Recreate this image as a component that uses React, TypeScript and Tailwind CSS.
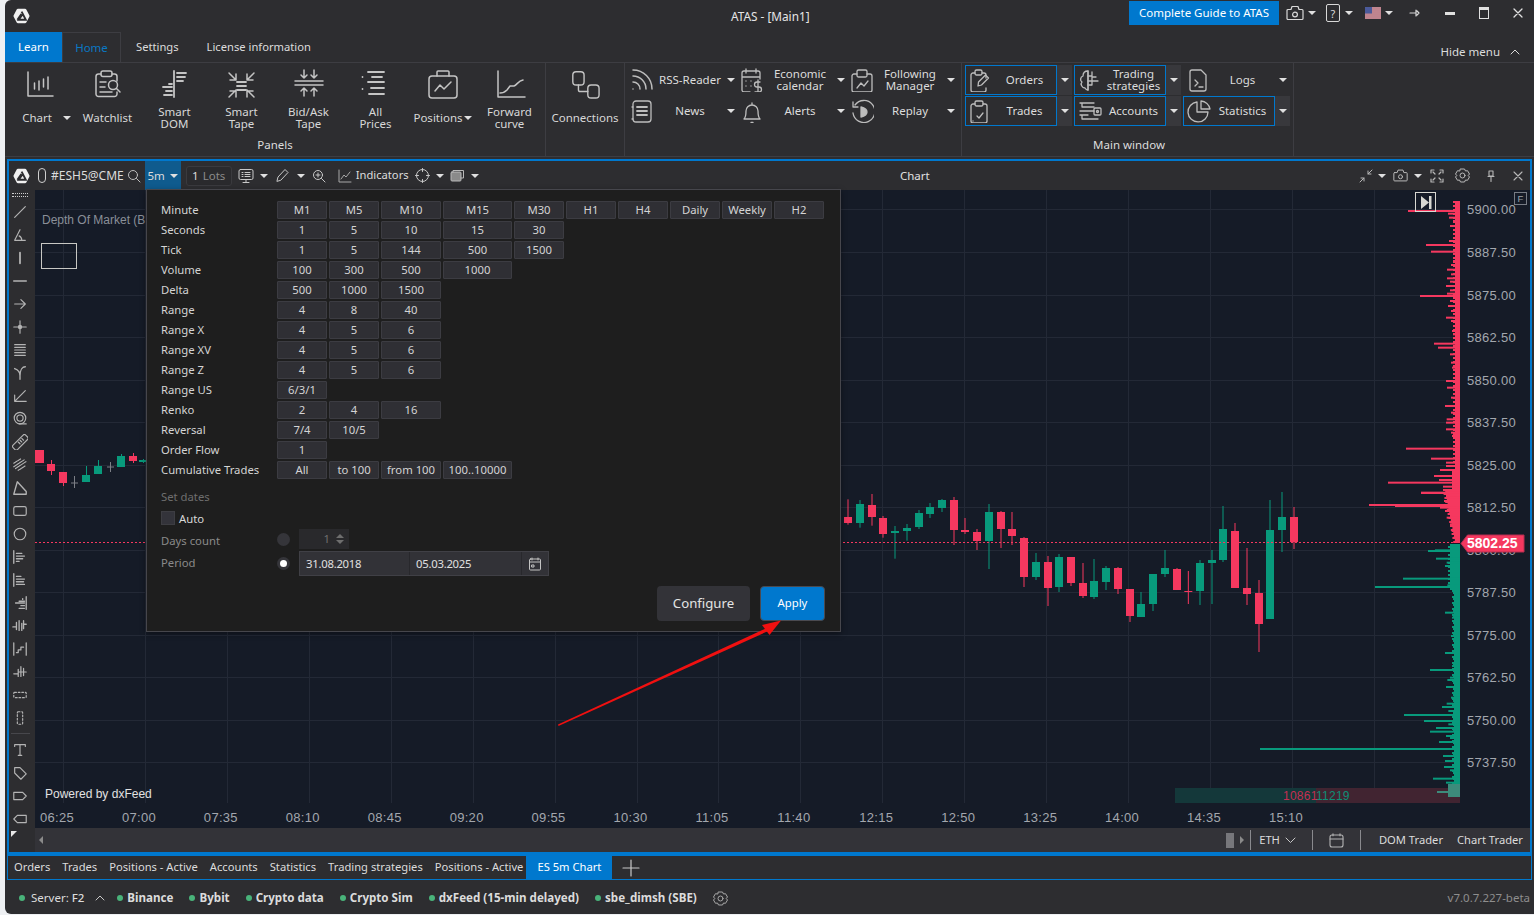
import type { ReactNode } from 'react'

const RED = '#f5385f'
const GREEN = '#089a7c'

// page coordinates are used inside the chart svg (translated by the canvas origin)
// [x, wickTop, wickBottom, bodyTop, bodyBottom, up]
const leftCandles: [number, number, number, number, number, number][] = [
  [39, 450, 463, 450, 463, 0], [51, 460, 475, 464, 471, 0], [63, 472, 486, 472, 483, 0],
  [86, 466, 482, 475, 482, 1], [98, 460, 474, 466, 474, 1], [121, 454, 467, 456, 467, 1],
  [133, 453, 463, 456, 461, 0], [143, 459, 463, 460, 462, 1],
]

// zoomed 3x from (840, 480)
const rightCandles: [number, number, number, number, number, number][] = [
  [24, 58, 134, 111, 129, 0], [60, 60, 143, 72, 129, 1], [96, 42, 137, 75, 111, 0],
  [129, 108, 173, 114, 162, 0], [165, 138, 236, 153, 159, 1], [201, 132, 182, 144, 153, 1],
  [237, 90, 147, 99, 141, 1], [270, 69, 114, 81, 102, 1], [306, 57, 96, 60, 84, 1],
  [342, 51, 195, 60, 150, 0], [375, 114, 162, 150, 156, 0], [411, 147, 210, 156, 183, 0],
  [447, 72, 267, 96, 183, 1], [483, 93, 204, 96, 147, 0], [516, 96, 195, 147, 168, 0],
  [552, 171, 321, 174, 291, 0], [588, 219, 300, 246, 291, 1], [624, 228, 378, 246, 324, 0],
  [657, 222, 336, 231, 321, 1], [693, 231, 318, 231, 309, 0], [729, 249, 354, 309, 348, 0],
  [762, 237, 357, 303, 351, 1], [798, 258, 330, 264, 306, 1], [834, 261, 342, 264, 327, 0],
  [870, 327, 426, 327, 408, 0], [903, 336, 411, 372, 411, 1], [939, 282, 393, 282, 372, 1],
  [975, 210, 291, 264, 282, 1], [1011, 264, 330, 267, 330, 0], [1045, 273, 372, 333, 336, 0],
  [1080, 240, 375, 249, 333, 1], [1116, 210, 372, 240, 249, 1], [1149, 78, 246, 147, 240, 1],
  [1185, 129, 324, 153, 324, 0], [1221, 204, 375, 324, 342, 0], [1257, 300, 516, 339, 432, 0],
  [1290, 60, 417, 150, 417, 1], [1326, 36, 216, 111, 150, 1], [1362, 81, 207, 111, 186, 0],
]

// [zoomY, zoomX] of volume profile spikes
const redTop = [[150, 204], [158, 324], [170, 327], [180, 339], [195, 330], [240, 327], [252, 258], [272, 273], [300, 339], [312, 333], [326, 321], [340, 333], [352, 321], [362, 330], [375, 318], [388, 330], [398, 321], [405, 240], [420, 330], [435, 324], [450, 333], [470, 318], [480, 333], [510, 336], [520, 339], [548, 282], [560, 294], [580, 330], [605, 333], [620, 336], [660, 318], [680, 321], [710, 333], [735, 315], [755, 333], [775, 320], [785, 318], [805, 318], [815, 333], [825, 336], [863, 198], [893, 273], [905, 318], [915, 318], [927, 300], [945, 282], [957, 297], [965, 144], [977, 309], [987, 309], [996, 243], [1010, 321]]
const redLow = [[5, 243], [20, 320], [30, 312], [42, 87], [45, 165], [50, 300], [60, 315], [80, 320], [100, 330], [120, 335], [140, 340]]
const greenLow = [[170, 330], [178, 285], [180, 264], [203, 288], [215, 320], [225, 315], [240, 325], [263, 189], [270, 330], [283, 322], [288, 105], [300, 338], [365, 315], [380, 336], [435, 333], [486, 315], [525, 336], [537, 270], [560, 330], [567, 322], [588, 318], [605, 340], [620, 333], [638, 320], [648, 306], [660, 325], [672, 192], [690, 252], [700, 325], [711, 288], [722, 270], [735, 318], [741, 330], [753, 297], [774, -240], [795, 309], [810, 315], [828, 312], [838, 330], [863, 279], [875, 318], [895, 306]]

const prices = ['5900.00', '5887.50', '5875.00', '5862.50', '5850.00', '5837.50', '5825.00', '5812.50', '5800.00', '5787.50', '5775.00', '5762.50', '5750.00', '5737.50']
const priceY = [209, 252, 295, 337, 380, 422, 465, 507, 550, 592, 635, 677, 720, 762]
const times = ['06:25', '07:00', '07:35', '08:10', '08:45', '09:20', '09:55', '10:30', '11:05', '11:40', '12:15', '12:50', '13:25', '14:00', '14:35', '15:10']

const rows: [string, string[]][] = [
  ['Minute', ['M1', 'M5', 'M10', 'M15', 'M30', 'H1', 'H4', 'Daily', 'Weekly', 'H2']],
  ['Seconds', ['1', '5', '10', '15', '30']],
  ['Tick', ['1', '5', '144', '500', '1500']],
  ['Volume', ['100', '300', '500', '1000']],
  ['Delta', ['500', '1000', '1500']],
  ['Range', ['4', '8', '40']],
  ['Range X', ['4', '5', '6']],
  ['Range XV', ['4', '5', '6']],
  ['Range Z', ['4', '5', '6']],
  ['Range US', ['6/3/1']],
  ['Renko', ['2', '4', '16']],
  ['Reversal', ['7/4', '10/5']],
  ['Order Flow', ['1']],
  ['Cumulative Trades', ['All', 'to 100', 'from 100', '100..10000']],
]

function Svg({ size = 24, vb = 24, sw = 1.4, className = '', children }: { size?: number; vb?: number; sw?: number; className?: string; children: ReactNode }) {
  return (
    <svg width={size} height={size} viewBox={`0 0 ${vb} ${vb}`} fill="none" stroke="currentColor" strokeWidth={sw} strokeLinecap="round" strokeLinejoin="round" className={`shrink-0 ${className}`}>
      {children}
    </svg>
  )
}

function Caret({ className = '' }: { className?: string }) {
  return <span className={`inline-block w-0 h-0 border-l-[4px] border-r-[4px] border-t-[4px] border-l-transparent border-r-transparent border-t-[#e0e0e0] shrink-0 ${className}`} />
}

function Logo() {
  return (
    <svg width="17" height="16" viewBox="0 0 17 16" className="shrink-0">
      <path d="M5 .8h7a1.5 1.5 0 0 1 1.3.8l3 5.6a1.5 1.5 0 0 1 0 1.6l-3 5.6a1.5 1.5 0 0 1-1.3.8H5a1.5 1.5 0 0 1-1.3-.8L.7 8.8a1.5 1.5 0 0 1 0-1.6l3-5.6A1.5 1.5 0 0 1 5 .8z" fill="#f0f0f0" />
      <path d="M8.6 3.6 12.8 11.8H5.6L9.2 6.9" fill="none" stroke="#2d2d30" strokeWidth="1.9" />
      <path d="M4.4 11.8 8.4 6" fill="none" stroke="#2d2d30" strokeWidth="1.9" />
    </svg>
  )
}

function Camera({ size = 18 }: { size?: number }) {
  return (
    <Svg size={size} vb={18} sw={1.2}>
      <path d="M2 5.5h3l1-3h6l1 3h3a1 1 0 0 1 1 1v8a1 1 0 0 1-1 1H2a1 1 0 0 1-1-1v-8a1 1 0 0 1 1-1z" />
      <circle cx="9" cy="10.5" r="2.4" />
    </Svg>
  )
}

const ribbonIcons: Record<string, ReactNode> = {
  chart: (
    <>
      <path d="M3 4v24h25" />
      <path d="M9.5 15v6M14 13v9M18.5 11v8M23 9v12" />
    </>
  ),
  watch: (
    <>
      <path d="M9 6H6.5A2.5 2.5 0 0 0 4 8.500V26a2.500 2.500 0 0 0 2.500 2.500h16A2.500 2.500 0 0 0 25 26v-2M25 13V8.500A2.500 2.500 0 0 0 22.500 6H20" />
      <rect x="9" y="3" width="11" height="5.500" rx="2" />
      <circle cx="21" cy="17" r="4.500" />
      <path d="m24.500 20.500 3.500 3.500M8 14h6M8 19h5M8 24h12" />
    </>
  ),
  dom: <path d="M15 3v26M18 5h9M18 9h8M18 13h6M4 19h9M7 23h6M5 27h8M10 16h3" strokeWidth="1.8" />,
  tape: (
    <>
      <path d="M3 5l7 7M4 12h6V6M28 5l-7 7M27 12h-6V6M3 29l7-7M4 23h6v6M28 29l-7-7M27 23h-6v6" />
      <path d="M11 14h9M11 18h9M11 22h9" strokeWidth="1.8" />
    </>
  ),
  bidask: (
    <>
      <path d="M11 2v8M8 7l3 3 3-3M21 2v8M18 7l3 3 3-3M11 28v-8M8 23l3-3 3 3M21 28v-8M18 23l3-3 3 3" />
      <path d="M2 13h28M2 17h28" strokeWidth="1.5" />
    </>
  ),
  all: <path d="M8 4h16M12 9h10M8 14h16M11 20h13M9 26h15M2.500 9v.1M2.500 21v.1" strokeWidth="1.800" />,
  pos: (
    <>
      <rect x="2" y="8" width="28" height="22" rx="3" />
      <path d="M10 8V4a1 1 0 0 1 1-1h10a1 1 0 0 1 1 1v4M8 23l5-6 4 4 7-7" />
    </>
  ),
  forward: (
    <>
      <path d="M4 3v26h27" />
      <path d="M6 25c4 0 5-1 7-3l3-4h4c3-1 4-5 9-6" />
    </>
  ),
  conn: (
    <>
      <rect x="3" y="3" width="12" height="14" rx="3.500" />
      <rect x="19" y="17" width="12" height="14" rx="3.500" />
      <path d="M9 17v5a2 2 0 0 0 2 2h8" />
    </>
  ),
  rss: <path d="M3 21v.1M3 14a7 7 0 0 1 7 7M3 8a13 13 0 0 1 13 13M3 2a19 19 0 0 1 19 19" strokeWidth="1.5" />,
  econ: (
    <>
      <path d="M10 24H4a2 2 0 0 1-2-2V5a2 2 0 0 1 2-2h14a2 2 0 0 1 2 2v6M2 9h18M6 1v4M16 1v4M6 13v.1M11 13v.1M6 18v.1M11 18v.1" />
      <path d="M20 14h-3a2 2 0 0 0 0 5h2a2 2 0 0 1 0 5h-4M18 12v14" />
    </>
  ),
  follow: (
    <>
      <path d="M7 6H4a2 2 0 0 0-2 2v14a2 2 0 0 0 2 2h16a2 2 0 0 0 2-2V8a2 2 0 0 0-2-2h-3" />
      <rect x="7" y="2" width="10" height="7" rx="1.500" />
      <path d="M7 20l4-5 3 3 4-5" />
    </>
  ),
  news: (
    <>
      <rect x="3" y="2" width="18" height="21" rx="3" />
      <path d="M7 8h10M7 12h10M7 16h10" strokeWidth="1.800" />
      <path d="M3 8H2M3 20H2" />
    </>
  ),
  bell: <path d="M4 20c2-2 2-4 2-8a6 6 0 0 1 12 0c0 4 0 6 2 8zM12 6V4M11 23.500h2" />,
  replay: (
    <>
      <path d="M5 6a11 11 0 1 1-2 8M3 3v5h5" />
      <path d="M11 8v10c4-1 6-3 6-5s-2-4-6-5z" fill="currentColor" />
    </>
  ),
  orders: (
    <>
      <path d="M6 5H4a2 2 0 0 0-2 2v15a2 2 0 0 0 2 2h11a2 2 0 0 0 2-2v-2M17 10V7a2 2 0 0 0-2-2h-2" />
      <rect x="6" y="2" width="7" height="5" rx="1.500" />
      <path d="m9 18 .5-4 7-7 3 3-7 7z" />
    </>
  ),
  strategy: (
    <>
      <path d="M10 3C6 3 5 6 5 8c-3 1-3 5-1 6-2 2 0 6 3 6 1 2 3 2 3 2z" />
      <path d="M14 4v4h-4M18 9h-4v4h-4M20 13h-6v4h-4" />
      <path d="M10 3v19" />
    </>
  ),
  logs: (
    <>
      <path d="M14 2H5a2 2 0 0 0-2 2v17a2 2 0 0 0 2 2h12a2 2 0 0 0 2-2V7z" />
      <path d="M8 12l3 3-3 3M12 19h4" />
    </>
  ),
  trades: (
    <>
      <path d="M6 5H4a2 2 0 0 0-2 2v15a2 2 0 0 0 2 2h12a2 2 0 0 0 2-2V7a2 2 0 0 0-2-2h-2" />
      <rect x="6" y="2" width="8" height="5" rx="1.500" />
      <path d="m8 17 2 2 4-5M4 22v.1" />
    </>
  ),
  accounts: (
    <>
      <path d="M2 4h14M8 8h8M2 12h14M2 16h8M6 20h14M4 4v4h4M4 16v4h2" />
      <rect x="16" y="9" width="7" height="7" rx="1" />
      <circle cx="19.500" cy="12.500" r="1" />
    </>
  ),
  stats: (
    <>
      <path d="M10 3a10 10 0 1 0 11 10H10z" />
      <path d="M14 2a10 10 0 0 1 9 8h-9z" />
    </>
  ),
}

function BigButton({ icon, label, w = 67, caret, iconSize = 32, gapCaret = 'ml-[1px]' }: { icon: string; label: ReactNode; w?: number; caret?: boolean; iconSize?: number; gapCaret?: string }) {
  return (
    <div className="flex flex-col items-center text-[#d8d8d8]" style={{ width: w }}>
      <div className="h-[36px] flex items-center justify-center text-[#c4c4c4]">
        <Svg size={iconSize} vb={32} sw={1.5}>{ribbonIcons[icon]}</Svg>
      </div>
      <div className="h-[28px] mt-[2px] flex items-center justify-center text-center leading-[12px]">
        <span>{label}</span>
        {caret && <Caret className={gapCaret} />}
      </div>
    </div>
  )
}

function SmallButton({ icon, label, w = 92, boxed, dark = true, drop = 15, textClass = '' }: { icon: string; label: ReactNode; w?: number; boxed?: boolean; dark?: boolean; drop?: number; textClass?: string }) {
  return (
    <div className="flex h-[30px]">
      <div className={`flex items-center pl-[3px] ${boxed ? 'border border-[#0078ce]' : 'border border-transparent'}`} style={{ width: w }}>
        <span className="text-[#bdbdbd]"><Svg size={24} sw={1.3}>{ribbonIcons[icon]}</Svg></span>
        <span className={`flex-1 text-center leading-[12px] ${textClass}`}>{label}</span>
      </div>
      <div className={`flex items-center justify-center ${dark ? 'bg-[#38383c]' : ''}`} style={{ width: drop }}>
        <Caret />
      </div>
    </div>
  )
}

function MenuButton({ icon, label, w = 110 }: { icon: string; label: ReactNode; w?: number }) {
  return (
    <div className="flex items-center h-[30px]" style={{ width: w }}>
      <span className="w-[28px] flex justify-center text-[#bdbdbd]"><Svg size={24} sw={1.3}>{ribbonIcons[icon]}</Svg></span>
      <span className="flex-1 text-center leading-[12px] pr-[3px]">{label}</span>
      <Caret className="mr-[3px]" />
    </div>
  )
}

const toolPaths: ReactNode[] = [
  <path d="M3 15 15 3" />,
  <path d="M3 15h12M3 15 9 3M8 10c2 1 3 3 3 5" />,
  <path d="M9 3v12" strokeWidth="2" />,
  <path d="M2 9h14M4 9h4" strokeWidth="1.800" />,
  <path d="M3 9h12M10 4l5 5-5 5" />,
  <><path d="M9 2v14M2 9h14" /><circle cx="9" cy="9" r="1.800" fill="currentColor" /></>,
  <path d="M3 3h12M3 6h12M3 9h12M3 12h12M3 15h12" />,
  <path d="M3 4c3 1 6 4 6 8v4M15 2c-3 0-6 3-6 10M3 4v.1" strokeWidth="1.500" />,
  <path d="M15 3 3 15M3 8v7h7M3 15h13" />,
  <><circle cx="9" cy="8" r="6.500" /><circle cx="9" cy="8" r="3.500" /><path d="M8 14.500h8" /></>,
  <><rect x="-1" y="6" width="20" height="7" rx="2" transform="rotate(-45 9 9)" /><path d="M7 9l2 2M9 7l2 2M11 5l2 2" /></>,
  <path d="M2 7l8-5M2 11l12-8M4 13l12-8M7 15l8-5" strokeDasharray="1.500 1" />,
  <path d="M2 16 6 2l10 11v3z" strokeWidth="1.500" />,
  <rect x="2" y="4" width="14" height="10" rx="2" />,
  <circle cx="9" cy="9" r="6.500" />,
  <path d="M2 2v14M5 5h6M5 8h9M5 11h7M5 14h3" strokeWidth="1.500" />,
  <path d="M2 2v14M5 5h5M5 8h9M5 11h8M5 14h9" strokeWidth="1.500" />,
  <path d="M16 2v14M12 4v1M8 7h6M4 9h10M10 12h4M8 15h6" strokeWidth="1.500" />,
  <path d="M1 10h4M5 5v8M8 3v11M11 6v8M13 3v9M16 7h-3" strokeWidth="1.500" />,
  <path d="M2 2v14M16 2v14M5 13h2v-3h3V7h3" strokeWidth="1.400" />,
  <path d="M2 11h5M7 6v8M10 3v11M13 5v8M7 9h9" strokeWidth="1.400" />,
  <rect x="2" y="6" width="14" height="6" rx="1" strokeDasharray="2 2" />,
  <rect x="6" y="2" width="6" height="14" rx="1" strokeDasharray="2 2" />,
]

const bottomTools: ReactNode[] = [
  <><path d="M3 5V3h12v2M9 3v12M7 15h4" /></>,
  <><path d="M3 3h6l7 7-6 6-7-7z" /></>,
  <path d="M2 5h10l4 4-4 4H2z" />,
  <path d="M16 5H6L2 9l4 4h10z" />,
]

function ChartSvg() {
  const v: ReactNode[] = []
  for (let i = 0; i < 17; i++) {
    const x = Math.round(63 + 81.93 * i) + 0.5
    v.push(<line key={i} x1={x} x2={x} y1={190} y2={803} stroke="#232936" />)
  }
  const base: ReactNode[] = []
  for (let y = 201; y < 542; y += 2) {
    let l = 1456 - ((y * 7) % 4)
    if (y > 470) l = 1452 - ((y * 5) % 5)
    if (y > 490) l = 1446 + (y - 490) * 0.2 - ((y * 3) % 4)
    base.push(<rect key={y} x={l} y={y} width={1460 - l} height={2} fill={RED} />)
  }
  for (let y = 544; y < 786; y += 2) {
    let l = 1454 - ((y * 7) % 3)
    if (y < 590) l = 1450 - ((y * 3) % 4)
    base.push(<rect key={y} x={l} y={y} width={1460 - l} height={2} fill={GREEN} />)
  }
  return (
    <svg width="1495" height="638" viewBox="0 0 1495 638" className="absolute left-0 top-0">
      <g transform="translate(-35 -190)">
        {priceY.map((y) => (
          <line key={y} x1={35} x2={1458} y1={y + 0.5} y2={y + 0.5} stroke="#232936" />
        ))}
        {v}
        {leftCandles.map(([x, a, b, c, d, up], i) => {
          const col = up ? GREEN : RED
          return (
            <g key={i}>
              <rect x={x} y={a} width={1} height={b - a} fill={col} />
              <rect x={Math.max(35, x - 4)} y={c} width={x < 40 ? 9 : 8} height={d - c} fill={col} />
            </g>
          )
        })}
        <path d="M74.500 476v12M71 483h7M110.500 462v10M107 467h7" stroke="#7c7f86" />
        {rightCandles.map(([x, a, b, c, d, up], i) => {
          const col = up ? GREEN : RED
          const cx = 840 + x / 3
          return (
            <g key={i}>
              <rect x={cx - 0.5} y={480 + a / 3} width={1} height={(b - a) / 3} fill={col} />
              <rect x={cx - 4} y={480 + c / 3} width={8} height={Math.max(1, (d - c) / 3)} fill={col} />
            </g>
          )
        })}
        <line x1={35} x2={1460} y1={542.500} y2={542.500} stroke={RED} strokeDasharray="2 2" />
        {base}
        {redTop.map(([y, x], i) => <rect key={i} x={1340 + x / 3} y={160 + y / 3} width={120 - x / 3} height={2} fill={RED} />)}
        {redLow.map(([y, x], i) => <rect key={i} x={1340 + x / 3} y={490 + y / 3} width={120 - x / 3} height={2} fill={RED} />)}
        {greenLow.map(([y, x], i) => <rect key={i} x={1340 + x / 3} y={490 + y / 3} width={120 - x / 3} height={2} fill={GREEN} />)}
        <rect x={1175} y={788} width={141} height={15} fill="#14383a" />
        <rect x={1316} y={788} width={144} height={15} fill="#412431" />
        <rect x={1448} y={784} width={12} height={13} fill="#3d8b7b" />
        <rect x={1437} y={791} width={23} height={2} fill="#3d8b7b" />
        <text x={1283} y={800} fontSize="12" letterSpacing="0.25" fontFamily="Liberation Sans, sans-serif" fill="#c42f52">10861</text>
        <text x={1316} y={800} fontSize="12" letterSpacing="0.25" fontFamily="Liberation Sans, sans-serif" fill="#0e8f77">11219</text>
        {prices.map((p, i) => (
          <text key={p} x={1467} y={priceY[i] + 5} fontSize="13" letterSpacing="0.3" fontFamily="Liberation Sans, sans-serif" fill="#a3a7ae">{p}</text>
        ))}
        {times.map((t, i) => (
          <text key={t} x={40 + 81.93 * i} y={822} fontSize="13" letterSpacing="0.3" fontFamily="Liberation Sans, sans-serif" fill="#a3a7ae">{t}</text>
        ))}
        <text x={45} y={798} fontSize="12" fontFamily="Liberation Sans, sans-serif" fill="#e2e2e2">Powered by dxFeed</text>
        <text x={42} y={224} fontSize="12" fontFamily="Liberation Sans, sans-serif" fill="#8a8f98">Depth Of Market (B</text>
        <rect x={41.500} y={243.500} width={35} height={25} fill="none" stroke="#c8c8c4" />
        <rect x={1415.500} y={192.500} width={20} height={19} fill="none" stroke="#d8d8d2" />
        <path d="M1421 196v13l8-6.500z" fill="#d8d8d2" />
        <rect x={1429} y={196} width={2.500} height={13} fill="#d8d8d2" />
        <rect x={1514.500} y={192.500} width={12} height={12} fill="none" stroke="#777c85" />
        <text x={1517.500} y={202} fontSize="9.500" fontFamily="Liberation Sans, sans-serif" fill="#9aa0a8">F</text>
        <path d="M1461 543.500l6.500-8.500H1524v17h-56.500z" fill={RED} stroke="#b52f50" />
        <text x={1467} y={548} fontSize="14" fontWeight="bold" fontFamily="Liberation Sans, sans-serif" fill="#ffffff">5802.25</text>
      </g>
    </svg>
  )
}

// the annotation arrow sits on top of the dialog
function RedArrow() {
  return (
    <svg width="240" height="115" viewBox="0 0 240 115" className="absolute left-[520px] top-[428px] pointer-events-none">
      <g transform="translate(-555 -618)">
        <path d="M558 724.500 770 626.500 771.500 629.500 558.500 726z" fill="#f01010" />
        <path d="M781 620.500 762 625 769.500 635z" fill="#f01010" />
      </g>
    </svg>
  )
}

function Dialog() {
  return (
    <div className="absolute left-[111px] top-[-1px] w-[695px] h-[443px] bg-[#1e1e1e] border border-[#46464c] pt-[11px] pl-[14px] pr-[15px] text-[11.3px] text-[#d4d4d4] shadow-[0_2px_6px_rgba(0,0,0,0.4)]">
      <div className="grid grid-cols-[114px_50px_50px_60px_69px_50px_50px_50px_50px_50px_50px] gap-x-[2px] gap-y-[2px] auto-rows-[18px]">
        {rows.map(([label, vals]) => (
          <div key={label} className="contents">
            <div className="leading-[18px]">{label}</div>
            {vals.map((val, i) => (
              <div key={i} className="bg-[#2f2f34] border border-[#3c3c42] rounded-[1px] flex items-center justify-center">
                {val}
              </div>
            ))}
            {Array.from({ length: 10 - vals.length }).map((_, i) => <div key={`e${i}`} />)}
          </div>
        ))}
      </div>
      <div className="mt-[11px] h-[14px] leading-[14px] text-[#6e6e6e]">Set dates</div>
      <div className="mt-[7px] h-[14px] flex items-center">
        <span className="w-[14px] h-[14px] bg-[#33333a] border border-[#3d3d42]" />
        <span className="ml-[4px] pt-[2px] text-[#d8d8d8]">Auto</span>
      </div>
      <div className="mt-[4px] h-[20px] flex items-center">
        <span className="w-[116px] pt-[5px] text-[#8a8a8a]">Days count</span>
        <span className="w-[22px]"><span className="block w-[13px] h-[13px] rounded-full bg-[#35353a]" /></span>
        <div className="w-[50px] h-[20px] bg-[#29292c] flex items-center justify-end text-[#6e6e6e]">
          <span className="mr-[6px]">1</span>
          <div className="flex flex-col gap-[2px] mr-[5px]">
            <span className="w-0 h-0 border-l-[4px] border-r-[4px] border-b-[4px] border-l-transparent border-r-transparent border-b-[#6e6e6e]" />
            <span className="w-0 h-0 border-l-[4px] border-r-[4px] border-t-[4px] border-l-transparent border-r-transparent border-t-[#6e6e6e]" />
          </div>
        </div>
      </div>
      <div className="mt-[2px] h-[25px] flex items-center">
        <span className="w-[116px] text-[#8a8a8a]">Period</span>
        <span className="w-[22px]">
          <span className="w-[13px] h-[13px] rounded-full bg-[#35353a] flex items-center justify-center"><span className="w-[7px] h-[7px] rounded-full bg-white" /></span>
        </span>
        <div className="w-[250px] h-[25px] bg-[#323237] border border-[#404046] flex items-center text-[#e0e0e0] tracking-[-0.25px]">
          <span className="w-[110px] pl-[6px] pt-[1px] h-full flex items-center border-r border-[#28282c]">31.08.2018</span>
          <span className="w-[112px] pl-[6px] pt-[1px] h-full flex items-center border-r border-[#28282c]">05.03.2025</span>
          <span className="flex-1 flex justify-center text-[#c4c4c4]">
            <Svg size={14} vb={14} sw={1}>
              <rect x="1.500" y="2" width="11" height="11" rx="1" />
              <path d="M1.500 5h11M4 1v2M10 1v2M4 8h2v2H4z" />
            </Svg>
          </span>
        </div>
      </div>
      <div className="mt-[10px] h-[35px] flex justify-end gap-[10px]">
        <div className="w-[93px] h-[35px] pt-[1px] rounded-[4px] bg-[#333338] flex items-center justify-center text-[13.2px] text-[#e4e4e4]">Configure</div>
        <div className="w-[65px] h-[35px] rounded-[4px] bg-[#0078ce] border border-[#4a4a50] flex items-center justify-center text-white">Apply</div>
      </div>
    </div>
  )
}

export default function App() {
  return (
    <div className="w-[1534px] h-[915px] overflow-hidden bg-[#eef0f3] pl-[5px] font-['Noto_Sans','Liberation_Sans',sans-serif] text-[11.5px] text-[#dcdcdc]">
      <div className="h-[914px] rounded-l-[6px] bg-[#2d2d30] flex flex-col">
        {/* title bar */}
        <div className="h-[32px] flex items-start relative">
          <div className="ml-[8px] mt-[8px]"><Logo /></div>
          <div className="absolute left-[726px] top-[8px] text-[11.8px] text-[#e6e6e6]">ATAS - [Main1]</div>
          <div className="ml-auto flex items-center mt-[1px] h-[24px]">
            <div className="w-[150px] h-[24px] bg-[#0078ce] text-white flex items-center justify-center">Complete Guide to ATAS</div>
            <div className="ml-[7px] flex items-center gap-[4px] text-[#d8d8d8]"><Camera size={18} /><Caret /></div>
            <div className="ml-[10px] flex items-center gap-[5px]">
              <span className="w-[14px] h-[18px] border border-[#d8d8d8] rounded-[2px] flex items-center justify-center text-[11px] leading-none">?</span>
              <Caret />
            </div>
            <div className="ml-[12px] flex items-center gap-[4px]">
              <svg width="16" height="12" viewBox="0 0 16 12">
                <rect width="16" height="12" fill="#c9c9cf" />
                <path d="M0 1h16M0 3h16M0 5h16M0 7h16M0 9h16M0 11h16" stroke="#b5404f" strokeWidth="1" />
                <rect width="7" height="6.500" fill="#4b5a9a" />
              </svg>
              <Caret />
            </div>
            <div className="ml-[16px] text-[#d8d8d8]">
              <Svg size={12} vb={12} sw={1.2}><path d="M1 6h6M7 3v6M8 4l2 2-2 2" /></Svg>
            </div>
            <span className="ml-[24px] w-[10px] h-[3px] bg-[#e0e0e0]" />
            <span className="ml-[24px] w-[10px] h-[12px] border border-[#e0e0e0] border-t-[3px]" />
            <div className="ml-[24px] mr-[11px] text-[#e0e0e0]">
              <Svg size={10} vb={10} sw={1.3}><path d="M1 1l8 8M9 1l-8 8" /></Svg>
            </div>
          </div>
        </div>

        {/* ribbon tabs */}
        <div className="h-[31px] flex items-stretch border-b border-[#3d3d42]">
          <div className="w-[57px] bg-[#0078ce] text-white flex items-center justify-center">Learn</div>
          <div className="w-[59px] border border-b-0 border-[#3d3d42] bg-[#2d2d30] text-[#0a78c4] flex items-center justify-center">Home</div>
          <div className="ml-[15px] flex items-center text-[11.2px]">Settings</div>
          <div className="ml-[28px] flex items-center text-[11.2px]">License information</div>
          <div className="ml-auto mr-[14px] mt-[12px] flex items-center gap-[10px] h-[16px]">
            <span>Hide menu</span>
            <Svg size={10} vb={10} sw={1}><path d="M1 7l4-4 4 4" /></Svg>
          </div>
        </div>

        {/* ribbon */}
        <div className="h-[94px] flex border-b border-[#3d3d42]">
          <div className="w-[541px] border-r border-[#3d3d42] flex flex-col">
            <div className="flex pl-[2px] pt-[3px]">
              <BigButton icon="chart" label={<span className="ml-[12px] mr-[11px]">Chart</span>} caret gapCaret="ml-0" />
              <BigButton icon="watch" label="Watchlist" />
              <BigButton icon="dom" label={<>Smart<br />DOM</>} />
              <BigButton icon="tape" label={<>Smart<br />Tape</>} />
              <BigButton icon="bidask" label={<>Bid/Ask<br />Tape</>} />
              <BigButton icon="all" label={<>All<br />Prices</>} />
              <BigButton icon="pos" label="Positions" caret />
              <BigButton icon="forward" label={<>Forward<br />curve</>} />
            </div>
            <div className="text-center mt-[5px] leading-[16px]">Panels</div>
          </div>
          <div className="w-[79px] border-r border-[#3d3d42] flex flex-col items-center pt-[3px]">
            <BigButton icon="conn" label="Connections" w={78} iconSize={30} />
          </div>
          <div className="w-[337px] border-r border-[#3d3d42] pl-[3px] pt-[2px] flex flex-col gap-[1px]">
            <div className="flex">
              <MenuButton icon="rss" label="RSS-Reader" />
              <MenuButton icon="econ" label={<>Economic<br />calendar</>} />
              <MenuButton icon="follow" label={<>Following<br />Manager</>} />
            </div>
            <div className="flex">
              <MenuButton icon="news" label="News" />
              <MenuButton icon="bell" label="Alerts" />
              <MenuButton icon="replay" label="Replay" />
            </div>
          </div>
          <div className="w-[332px] border-r border-[#3d3d42] flex flex-col items-start pl-[3px] pt-[2px]">
            <div className="flex gap-[2px]">
              <SmallButton icon="orders" label="Orders" boxed />
              <SmallButton icon="strategy" label={<>Trading<br />strategies</>} boxed />
              <SmallButton icon="logs" label="Logs" dark={false} />
            </div>
            <div className="flex gap-[2px] mt-[1px]">
              <SmallButton icon="trades" label="Trades" boxed />
              <SmallButton icon="accounts" label="Accounts" boxed />
              <SmallButton icon="stats" label="Statistics" boxed />
            </div>
            <div className="self-center mt-[11px] leading-[16px]">Main window</div>
          </div>
        </div>

        {/* chart window */}
        <div className="mt-[2px] mx-[2px] h-[697px] border-t-[2px] border-x-[2px] border-b-[4px] border-[#0078ce] flex flex-col">
          <div className="h-[29px] flex items-center relative shrink-0">
            <div className="ml-[4px]"><Logo /></div>
            <span className="ml-[8px] w-[8px] h-[15px] border border-[#cfcfcf] rounded-[4px]" />
            <span className="ml-[5px] text-[12px]">#ESH5@CME</span>
            <span className="ml-[3px] text-[#bdbdbd]">
              <Svg size={14} vb={14} sw={1}><circle cx="6" cy="6" r="4.500" /><path d="m9.500 9.500 3.500 3.500" /></Svg>
            </span>
            <div className="ml-[4px] w-[36px] h-[29px] bg-[#0f5b8e] flex items-center justify-center gap-[5px]">
              <span>5m</span><Caret />
            </div>
            <div className="ml-[5px] w-[46px] h-[20px] rounded-[3px] border border-[#3a3a3e] bg-[#2a2a2d] flex items-center justify-center gap-[4px]">
              <span>1</span><span className="text-[#8a8a8a]">Lots</span>
            </div>
            <span className="ml-[6px] text-[#c8c8c8]">
              <Svg size={16} vb={16} sw={1}><rect x="1" y="1.500" width="14" height="10" rx="1.500" /><path d="M4 4.500h1M7 4.500h5M4 6.500h1M7 6.500h5M4 8.500h1M7 8.500h5M8 12v2.500M5 14.500h6" /></Svg>
            </span>
            <Caret className="ml-[6px]" />
            <span className="ml-[7px] text-[#c8c8c8]">
              <Svg size={15} vb={15} sw={1}><path d="M2 13l1-4 7-7.500 3 3-7 7.500z" /></Svg>
            </span>
            <Caret className="ml-[7px]" />
            <span className="ml-[7px] text-[#c8c8c8]">
              <Svg size={14} vb={14} sw={1}><circle cx="6" cy="6" r="4.500" /><path d="m9.500 9.500 3.500 3.500M4 6h4M6 4v4" /></Svg>
            </span>
            <span className="ml-[12px] text-[#a8a8a8]">
              <Svg size={14} vb={14} sw={1}><path d="M1 1v12h12M3 10l3-4 2 2 4-5" /></Svg>
            </span>
            <span className="ml-[4px] text-[11.2px]">Indicators</span>
            <span className="ml-[6px] text-[#c8c8c8]">
              <Svg size={15} vb={15} sw={1}><circle cx="7.500" cy="7.500" r="6" /><path d="M7.500.5v3M7.500 11.500v3M.5 7.500h3M11.500 7.500h3" /></Svg>
            </span>
            <Caret className="ml-[6px]" />
            <span className="ml-[6px] text-[#b8b8b8]">
              <Svg size={15} vb={15} sw={1}><rect x="1" y="4" width="10" height="9" rx="1" fill="#8a8a8a" /><path d="M3 4V2.500h10.500V10H11" /></Svg>
            </span>
            <Caret className="ml-[6px]" />
            <span className="absolute left-[891px] top-[6px] text-[#e0e0e0]">Chart</span>
            <div className="ml-auto mr-[7px] flex items-center text-[#b8b8b8]">
              <Svg size={14} vb={14} sw={1}><path d="M1 13l4-4M5 12V9H2M13 1 9 5M9 2v3h3" /></Svg>
              <Caret className="ml-[5px]" />
              <span className="ml-[7px]"><Camera size={15} /></span>
              <Caret className="ml-[6px]" />
              <span className="ml-[8px]">
                <Svg size={14} vb={14} sw={1.2}><path d="M1 4V1h3M10 1h3v3M1 10v3h3M10 13h3v-3M3 3l2 2M11 3 9 5M3 11l2-2M11 11 9 9" /></Svg>
              </span>
              <span className="ml-[11px]">
                <Svg size={15} vb={15} sw={1}><path d="M5.500 1h4l1 2 2-.3 2 3.300-1.300 1.500L14.500 9l-2 3.300-2-.3-1 2h-4l-1-2-2 .3-2-3.300 1.300-1.500L.5 6l2-3.300 2 .3z" /><circle cx="7.500" cy="7.500" r="2.500" /></Svg>
              </span>
              <span className="ml-[15px]">
                <Svg size={12} vb={12} sw={1.100}><path d="M4 1h4v5H4zM3 6.500h6M6 7v4.500" /></Svg>
              </span>
              <span className="ml-[16px]">
                <Svg size={10} vb={10} sw={1.100}><path d="M1 1l8 8M9 1l-8 8" /></Svg>
              </span>
            </div>
          </div>

          <div className="flex-1 flex min-h-0">
            {/* drawing tools */}
            <div className="w-[26px] shrink-0 flex flex-col items-center pr-[4px] text-[#b4b4b4]">
              <div className="h-[10px] flex items-center">
                <span className="w-[16px] h-[4px] border-y border-dotted border-[#d0d0d0]" />
              </div>
              {toolPaths.map((p, i) => (
                <div key={i} className="h-[23px] flex items-center justify-center">
                  <Svg size={16} vb={18} sw={1.300}>{p}</Svg>
                </div>
              ))}
              <span className="mt-[4px] w-[19px] border-t border-[#47474c]" />
              <div className="mt-[4px]">
                {bottomTools.map((p, i) => (
                  <div key={i} className="h-[23px] flex items-center justify-center">
                    <Svg size={16} vb={18} sw={1.300}>{p}</Svg>
                  </div>
                ))}
              </div>
              <span className="self-start ml-[2px] mt-[1px] w-0 h-0 border-t-[6px] border-r-[6px] border-t-[#e8e8e8] border-r-transparent" />
            </div>

            <div className="flex-1 flex flex-col min-w-0">
              <div className="h-[638px] relative bg-[#151b27] shrink-0">
                <ChartSvg />
                <Dialog />
                <RedArrow />
              </div>
              {/* bottom strip */}
              <div className="h-[24px] shrink-0 bg-[#333338] flex items-center relative text-[11.2px]">
                <span className="ml-[4px] w-0 h-0 border-y-[4px] border-r-[4px] border-y-transparent border-r-[#8a8a8a]" />
                <span className="ml-auto w-[8px] h-[15px] bg-[#77777b]" />
                <span className="ml-[6px] w-0 h-0 border-y-[4px] border-l-[4px] border-y-transparent border-l-[#8a8a8a]" />
                <span className="ml-[6px] h-[20px] border-l border-[#8a8a8e]" />
                <span className="ml-[8px]">ETH</span>
                <span className="ml-[5px] text-[#c8c8c8]">
                  <Svg size={11} vb={11} sw={1}><path d="M1 3l4.500 4.500L10 3" /></Svg>
                </span>
                <span className="ml-[16px] h-[20px] border-l border-[#8a8a8e]" />
                <span className="ml-[16px] text-[#b4b4b4]">
                  <Svg size={15} vb={15} sw={1.100}><rect x="1" y="2" width="13" height="12" rx="2" /><path d="M1 6h13M4 .8v2M11 .8v2" /></Svg>
                </span>
                <span className="ml-[16px] h-[20px] border-l border-[#8a8a8e]" />
                <span className="ml-[18px]">DOM Trader</span>
                <span className="ml-[14px] mr-[7px]">Chart Trader</span>
              </div>
            </div>
          </div>
        </div>

        {/* workspace tabs */}
        <div className="mx-[2px] h-[24px] border-x border-b border-[#0078ce] flex items-center shrink-0 text-[11.2px]">
          <span className="ml-[6px]">Orders</span>
          <span className="ml-[12px]">Trades</span>
          <span className="ml-[12px]">Positions - Active</span>
          <span className="ml-[12px]">Accounts</span>
          <span className="ml-[12px]">Statistics</span>
          <span className="ml-[12px]">Trading strategies</span>
          <span className="ml-[12px]">Positions - Active</span>
          <div className="ml-[3px] w-[86px] h-full bg-[#0078ce] text-white flex items-center justify-center">ES 5m Chart</div>
          <span className="ml-[10px] text-[#c8c8c8]">
            <Svg size={18} vb={18} sw={1.200}><path d="M9 1v16M1 9h16" /></Svg>
          </span>
        </div>

        {/* status bar */}
        <div className="flex-1 flex items-center pl-[14px] pt-[2px]">
          <span className="w-[6px] h-[6px] rounded-full bg-[#49b37a]" />
          <span className="ml-[6px] font-normal">Server: <span className="font-medium">F2</span></span>
          <span className="ml-[11px] mr-[12px] text-[#c8c8c8]">
            <Svg size={10} vb={10} sw={1}><path d="M1 7l4-4 4 4" /></Svg>
          </span>
          {['Binance', 'Bybit', 'Crypto data', 'Crypto Sim', 'dxFeed (15-min delayed)', 'sbe_dimsh (SBE)'].map((s) => (
            <span key={s} className="flex items-center mr-[16px]">
              <span className="w-[6px] h-[6px] rounded-full bg-[#49b37a]" />
              <span className="ml-[4px] font-bold text-[11.6px]">{s}</span>
            </span>
          ))}
          <span className="text-[#a8a8a8]">
            <Svg size={15} vb={15} sw={1}><path d="M5.500 1h4l1 2 2-.3 2 3.300-1.300 1.500L14.500 9l-2 3.300-2-.3-1 2h-4l-1-2-2 .3-2-3.300 1.300-1.500L.5 6l2-3.300 2 .3z" /><circle cx="7.500" cy="7.500" r="2.500" /></Svg>
          </span>
          <span className="ml-auto mr-[4px] text-[#8e8e8e]">v7.0.7.227-beta</span>
        </div>
      </div>
    </div>
  )
}
